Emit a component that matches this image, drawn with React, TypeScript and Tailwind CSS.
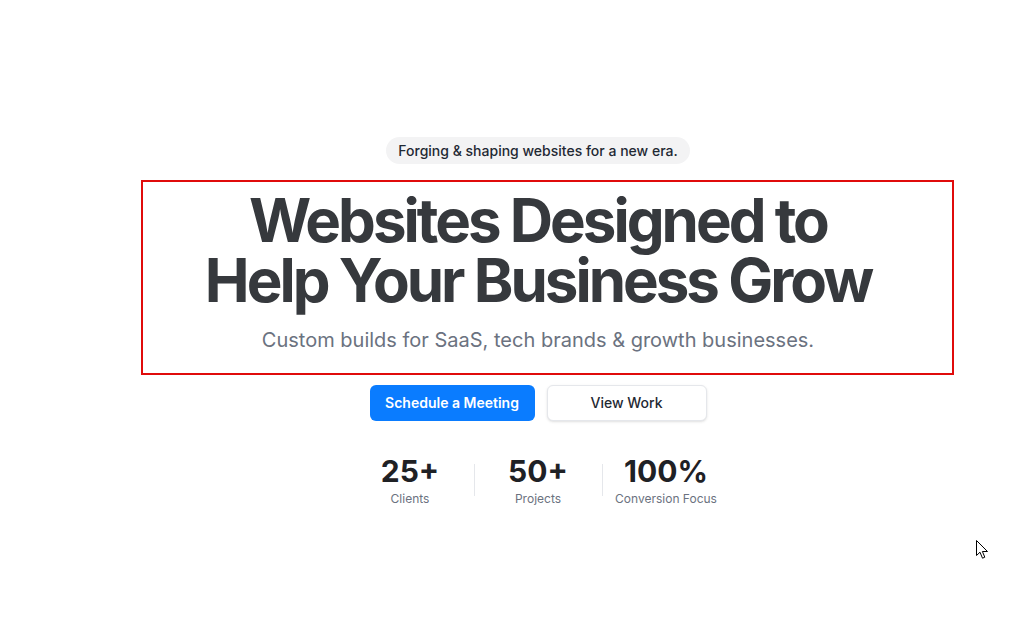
export default function App() {
  return (
    <div className="relative min-h-[638px] w-full bg-white font-['Inter',sans-serif]">
      <div className="flex flex-col items-center pl-[42px] pt-[137px]">
        {/* badge */}
        <div className="rounded-full bg-[#f3f3f4] px-3 py-[5px] text-sm font-medium leading-[17px] text-[#1f2933]">
          Forging &amp; shaping websites for a new era.
        </div>

        {/* headline */}
        <h1 className="mt-[26px] text-center text-[60px] font-bold leading-[60px] tracking-[-0.05em] text-[#36393d]">
          Websites Designed to
          <br />
          Help Your Business Grow
        </h1>
        <p className="mt-4 text-xl leading-7 text-[#6b7280]">
          Custom builds for SaaS, tech brands &amp; growth businesses.
        </p>

        {/* buttons */}
        <div className="mt-[31px] flex items-center gap-3">
          <button className="h-9 w-[165px] rounded-md bg-[#0a7cff] text-sm font-semibold text-white">
            Schedule a Meeting
          </button>
          <button className="h-9 w-[160px] rounded-md border border-gray-200 bg-white text-sm font-medium text-[#1f2933] shadow-sm">
            View Work
          </button>
        </div>

        {/* stats */}
        <div className="mt-8 flex items-center">
          {[
            { value: '25+', label: 'Clients' },
            { value: '50+', label: 'Projects' },
            { value: '100%', label: 'Conversion Focus' },
          ].map((s, i) => (
            <div key={s.label} className="flex items-center">
              {i > 0 && <div className="h-8 w-px bg-gray-200" />}
              <div className="flex w-[127px] flex-col items-center">
                <span className="text-3xl font-bold leading-9 text-[#1f2125]">{s.value}</span>
                <span className="mt-0.5 text-xs leading-4 text-[#6b7280]">{s.label}</span>
              </div>
            </div>
          ))}
        </div>
      </div>

      {/* selection outline overlay */}
      <div className="pointer-events-none absolute left-[141px] top-[180px] h-[195px] w-[813px] border-2 border-[#e00b0b]" />

      {/* mouse cursor */}
      <svg className="absolute left-[976px] top-[540px]" width="13" height="20" viewBox="0 0 13 20">
        <path d="M0.5 0.5 L0.5 15.5 L4 12.2 L6.5 18.2 L8.8 17.2 L6.4 11.5 L11.5 11.5 Z" fill="#fff" stroke="#000" strokeWidth="1" strokeLinejoin="miter" />
      </svg>
    </div>
  );
}
